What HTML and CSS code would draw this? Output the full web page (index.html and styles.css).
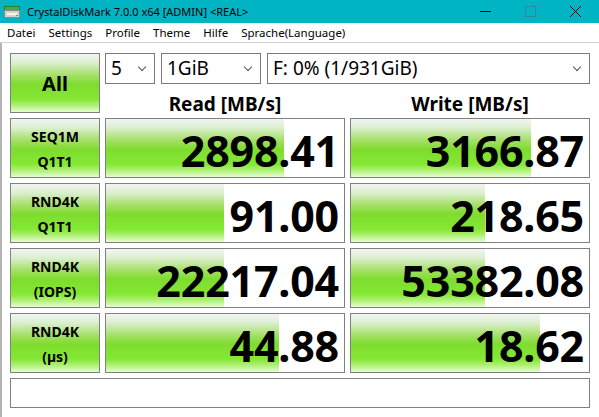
FILE: index.html
```html
<!DOCTYPE html>
<html lang="de">
  <head>
    <meta charset="utf-8" />
    <title>CrystalDiskMark 7.0.0 x64 [ADMIN] &lt;REAL&gt;</title>
    <link rel="stylesheet" href="styles.css">
  </head>
  <body>
    <div class="window">
      <header class="titlebar">
        <svg class="app-icon" width="16" height="16" viewBox="0 0 16 16">
          <rect x="0.5" y="2.5" width="15" height="4" fill="#3fae49" stroke="#2a7d33" />
          <rect x="0.5" y="6.5" width="15" height="7" fill="#d4d4d4" stroke="#8a8a8a" />
          <rect x="3" y="9" width="10" height="2" fill="#f4f4f4" />
          <rect x="12" y="11" width="2" height="1" fill="#3fae49" />
        </svg>
        <span class="title">CrystalDiskMark 7.0.0 x64 [ADMIN] &lt;REAL&gt;</span>
        <div class="controls">
          <svg width="45" height="23" viewBox="0 0 45 23"><line x1="17" y1="11.5" x2="28" y2="11.5" stroke="#000" /></svg>
          <svg width="45" height="23" viewBox="0 0 45 23"><rect x="17.5" y="6.5" width="10" height="10" fill="none" stroke="#2a8c96" /></svg>
          <svg width="45" height="23" viewBox="0 0 45 23"><path d="M17 6 L28 17 M28 6 L17 17" stroke="#000" /></svg>
        </div>
      </header>

      <nav class="menubar">
        <span>Datei</span>
        <span>Settings</span>
        <span>Profile</span>
        <span>Theme</span>
        <span>Hilfe</span>
        <span>Sprache(Language)</span>
      </nav>

      <main class="panel">
        <div class="grid">
          <button class="btn all" type="button">All</button>
          <div class="top-area">
            <div class="selects">
              <div class="combo count">5<i class="chev"></i></div>
              <div class="combo size">1GiB<i class="chev"></i></div>
              <div class="combo drive">F: 0% (1/931GiB)<i class="chev"></i></div>
            </div>
            <div class="heads">
              <span>Read [MB/s]</span>
              <span>Write [MB/s]</span>
            </div>
          </div>

          <button class="btn" type="button">SEQ1M<br>Q1T1</button>
          <div class="meter"><div class="bar" style="width: 178px"></div><span>2898.41</span></div>
          <div class="meter"><div class="bar" style="width: 180px"></div><span>3166.87</span></div>

          <button class="btn" type="button">RND4K<br>Q1T1</button>
          <div class="meter"><div class="bar" style="width: 118px"></div><span>91.00</span></div>
          <div class="meter"><div class="bar" style="width: 134px"></div><span>218.65</span></div>

          <button class="btn" type="button">RND4K<br>(IOPS)</button>
          <div class="meter"><div class="bar" style="width: 118px"></div><span>22217.04</span></div>
          <div class="meter"><div class="bar" style="width: 134px"></div><span>53382.08</span></div>

          <button class="btn" type="button">RND4K<br>(&micro;s)</button>
          <div class="meter"><div class="bar" style="width: 173px"></div><span>44.88</span></div>
          <div class="meter"><div class="bar" style="width: 189px"></div><span>18.62</span></div>

          <div class="status"></div>
        </div>
      </main>
    </div>
  </body>
</html>
```

FILE: styles.css
```css
html, body {
  margin: 0;
  padding: 0;
  background: #fff;
}
body {
  font-family: "Noto Sans", "Open Sans", sans-serif;
  color: #000;
}
.window {
  width: 599px;
  height: 417px;
  overflow: hidden;
}

/* title bar */
.titlebar {
  height: 23px;
  background: #00b4c4;
  display: flex;
  align-items: center;
}
.app-icon {
  margin: 0 7px 0 4px;
}
.title {
  font-size: 11px;
  flex: 1;
}
.controls {
  display: flex;
  margin-right: 1px;
}
.controls svg {
  display: block;
}

/* menu */
.menubar {
  height: 19px;
  display: flex;
  align-items: center;
  padding-left: 7px;
  gap: 13px;
  font-size: 11.5px;
  border-bottom: 1px solid #d0d0d0;
}

/* main panel */
.panel {
  border-left: 2px solid #b4b4b4;
  padding: 10px 9px 10px 8px;
  height: 364px;
}
.grid {
  display: grid;
  grid-template-columns: 90px 240px 240px;
  grid-template-rows: repeat(5, 60px) 30px;
  gap: 5px;
}

.btn,
.bar {
  background: linear-gradient(to bottom,
    #f2f4f2 0%,
    #dcefd0 15%,
    #a6e06a 36%,
    #7fdc2e 52%,
    #84e834 78%,
    #b6f280 90%,
    #e6fcd4 100%);
}

.btn {
  border: 1px solid #808080;
  font-family: inherit;
  font-weight: bold;
  font-size: 14px;
  line-height: 25px;
  padding: 1px 0 0;
  margin: 0;
  color: #000;
}
.btn.all {
  font-size: 20px;
}

.top-area {
  grid-column: 2 / 4;
  display: flex;
  flex-direction: column;
}
.selects {
  display: flex;
  gap: 6px;
}
.combo {
  position: relative;
  height: 31px;
  box-sizing: border-box;
  border: 1px solid #7a7a7a;
  font-size: 19px;
  line-height: 29px;
  padding-left: 5px;
}
.combo.count { width: 50px; }
.combo.size { width: 100px; }
.combo.drive { flex: 1; }
.chev {
  position: absolute;
  right: 9px;
  top: 10px;
  width: 5px;
  height: 5px;
  border-right: 1px solid #555;
  border-bottom: 1px solid #555;
  transform: rotate(45deg);
}
.heads {
  display: flex;
  gap: 5px;
  flex: 1;
  align-items: center;
}
.heads span {
  width: 240px;
  text-align: center;
  font-weight: bold;
  font-size: 19px;
  padding-top: 7px;
}

.meter {
  position: relative;
  border: 1px solid #808080;
  background: #fff;
  display: flex;
  justify-content: flex-end;
  align-items: center;
}
.bar {
  position: absolute;
  left: 0;
  top: 0;
  bottom: 0;
}
.meter span {
  position: relative;
  font-weight: bold;
  font-size: 43px;
  line-height: 1;
  padding: 4px 5px 0 0;
  letter-spacing: -0.2px;
}

.status {
  grid-column: 1 / 4;
  border: 1px solid #808080;
}
```
